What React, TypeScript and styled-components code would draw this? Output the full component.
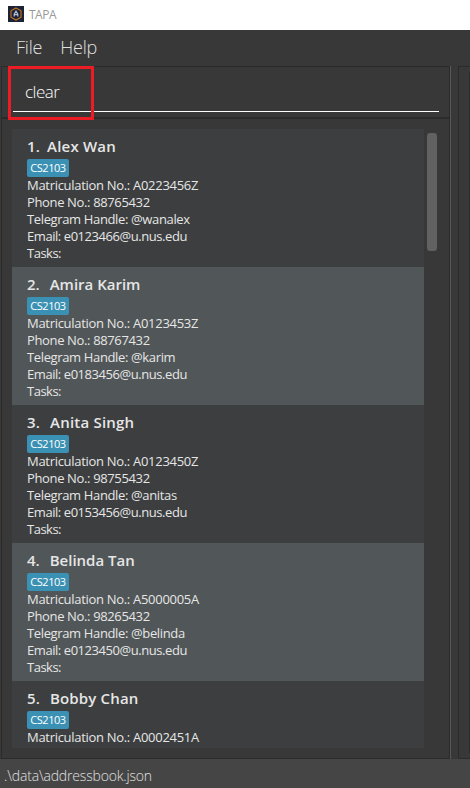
import React from "react";
import styled, { createGlobalStyle } from "styled-components";

const GlobalStyle = createGlobalStyle`
  * { box-sizing: border-box; }
  body {
    margin: 0;
    overflow: hidden;
    font-family: "Open Sans", "Noto Sans", sans-serif;
    background: #383838;
  }
`;

const Window = styled.div`
  width: 470px;
  height: 788px;
  display: flex;
  flex-direction: column;
  overflow: hidden;
  background: #383838;
`;

const TitleBar = styled.header`
  height: 30px;
  flex: none;
  display: flex;
  align-items: center;
  gap: 5px;
  padding: 0 0 2px 8px;
  background: #fff;
  color: #999;
  font-size: 12px;
  letter-spacing: -0.5px;
`;

const MenuBar = styled.nav`
  height: 36px;
  flex: none;
  display: flex;
  align-items: center;
  gap: 18px;
  padding: 0 0 2px 16px;
  color: #e0e0e0;
  font-size: 18px;
  font-weight: 300;
`;

const MenuItem = styled.span<{ $spacing: number }>`
  letter-spacing: ${(p) => p.$spacing}px;
`;

const Body = styled.main`
  height: 693px;
  flex: none;
  display: flex;
`;

const LeftColumn = styled.section`
  width: 451px;
  flex: none;
  display: flex;
  flex-direction: column;
  padding-left: 1px;
  border-right: 1px solid #585858;
`;

const CommandPanel = styled.div`
  position: relative;
  height: 52px;
  flex: none;
  padding: 7px 10px 0 11px;
  border: 1px solid #2b2b2b;
`;

const CommandField = styled.div`
  height: 38px;
  padding: 5px 0 0 12px;
  border-bottom: 1px solid #fff;
  color: #fff;
  font-size: 17px;
  line-height: 25px;
  font-weight: 300;
  letter-spacing: -0.5px;
`;

const Highlight = styled.div`
  position: absolute;
  left: 6px;
  top: -1px;
  width: 86px;
  height: 54px;
  border: 3px solid #ed1c24;
`;

const ListPanel = styled.div`
  flex: 1;
  min-height: 0;
  display: flex;
  gap: 3px;
  padding: 10px 0 10px 10px;
  border: 1px solid #2b2b2b;
`;

const List = styled.div`
  width: 412px;
  overflow: hidden;
`;

const Card = styled.article`
  height: 138px;
  padding: 5px 15px;
  background: #3c3e3f;
  color: #e6e6e6;
  &:nth-child(even) { background: #515658; }
`;

const CardTitle = styled.h2<{ $gap: number; $spacing: number }>`
  height: 25px;
  margin: 0;
  display: flex;
  gap: ${(p) => p.$gap}px;
  font-size: 15px;
  line-height: 25px;
  font-weight: 600;
  white-space: nowrap;
  letter-spacing: ${(p) => p.$spacing}px;
`;

const Tag = styled.span`
  display: flex;
  width: 42px;
  height: 18px;
  padding-bottom: 1px;
  align-items: center;
  justify-content: center;
  border-radius: 2px;
  background: #3b91b3;
  color: #fff;
  font-size: 11px;
  letter-spacing: -0.45px;
`;

const Detail = styled.div<{ $spacing: number }>`
  height: 17px;
  font-size: 13px;
  line-height: 17px;
  white-space: nowrap;
  letter-spacing: ${(p) => p.$spacing}px;
`;

const ScrollThumb = styled.div`
  width: 10px;
  height: 118px;
  margin-top: 4px;
  border-radius: 3px;
  background: #616161;
`;

const RightPanel = styled.aside`
  flex: 1;
  margin-left: 7px;
  padding: 5px 0 5px 10px;
  border: solid #2b2b2b;
  border-width: 1px 0 1px 1px;
`;

const ResultArea = styled.div`
  height: 100%;
  border: solid #2b2b2b;
  border-width: 1px 0 1px 1px;
`;

const StatusBar = styled.footer`
  height: 29px;
  padding-left: 4px;
  background: #454545;
  color: #e0e0e0;
  font-size: 14px;
  line-height: 34px;
  font-weight: 300;
  letter-spacing: -0.18px;
`;

const Logo = () => (
  <svg width="16" height="16" viewBox="0 0 16 16">
    <rect width="16" height="16" fill="#1c2238" />
    <path d="M8 1.9 13 4.8V11.2L8 14.1 3 11.2V4.8Z" fill="none" stroke="#c6751c" strokeWidth="1.1" />
    <path d="M6.2 10.5V8.2L8 5.2 9.8 8.2V10.5M6.5 8.6H9.5" fill="none" stroke="#b4bfd0" strokeWidth="1.2" />
  </svg>
);

const people = [
  { name: "Alex Wan", gap: 7, spacing: 0.2, id: "A0223456Z", phone: "88765432", handle: "@wanalex", email: "e0123466@u.nus.edu" },
  { name: "Amira Karim", gap: 10, spacing: 0, id: "A0123453Z", phone: "88767432", handle: "@karim", email: "e0183456@u.nus.edu" },
  { name: "Anita Singh", gap: 10, spacing: 0.2, id: "A0123450Z", phone: "98755432", handle: "@anitas", email: "e0153456@u.nus.edu" },
  { name: "Belinda Tan", gap: 10, spacing: 0, id: "A5000005A", phone: "98265432", handle: "@belinda", email: "e0123450@u.nus.edu" },
  { name: "Bobby Chan", gap: 10, spacing: 0.15, id: "A0002451A" },
];

export default function App() {
  return (
    <>
      <GlobalStyle />
      <Window>
        <TitleBar><Logo />TAPA</TitleBar>
        <MenuBar>
          <MenuItem $spacing={-0.2}>File</MenuItem>
          <MenuItem $spacing={-0.2}>Help</MenuItem>
        </MenuBar>
        <Body>
          <LeftColumn>
            <CommandPanel>
              <CommandField>clear</CommandField>
              <Highlight />
            </CommandPanel>
            <ListPanel>
              <List>
                {people.map((p, i) => (
                  <Card key={p.id}>
                    <CardTitle $gap={p.gap} $spacing={p.spacing}>
                      <span>{i + 1}.</span>
                      <span>{p.name}</span>
                    </CardTitle>
                    <Tag>CS2103</Tag>
                    <Detail $spacing={-0.3}>Matriculation No.: {p.id}</Detail>
                    {p.phone && (
                      <>
                        <Detail $spacing={-0.36}>Phone No.: {p.phone}</Detail>
                        <Detail $spacing={-0.36}>Telegram Handle: {p.handle}</Detail>
                        <Detail $spacing={-0.44}>Email: {p.email}</Detail>
                        <Detail $spacing={-0.5}>Tasks:</Detail>
                      </>
                    )}
                  </Card>
                ))}
              </List>
              <ScrollThumb />
            </ListPanel>
          </LeftColumn>
          <RightPanel><ResultArea /></RightPanel>
        </Body>
        <StatusBar>.\data\addressbook.json</StatusBar>
      </Window>
    </>
  );
}
